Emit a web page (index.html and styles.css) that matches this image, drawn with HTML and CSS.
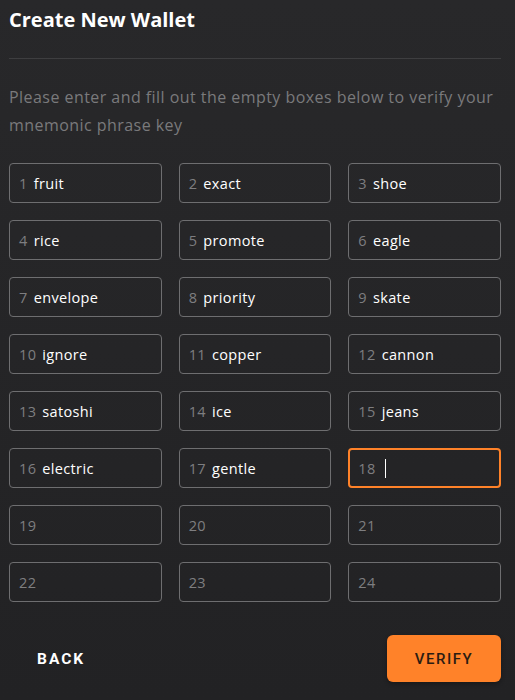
FILE: index.html
```html
<!DOCTYPE html>
<html>
<head>
<meta charset="utf-8">
<link rel="stylesheet" href="styles.css">
</head>
<body>
<div class="page">
  <h1 class="title">Create New Wallet</h1>
  <hr class="divider">
  <p class="desc">Please enter and fill out the empty boxes below to verify your mnemonic phrase key</p>
  <div class="grid">
    <div class="box"><span class="num">1</span><span class="word">fruit</span></div>
    <div class="box"><span class="num">2</span><span class="word">exact</span></div>
    <div class="box"><span class="num">3</span><span class="word">shoe</span></div>
    <div class="box"><span class="num">4</span><span class="word">rice</span></div>
    <div class="box"><span class="num">5</span><span class="word">promote</span></div>
    <div class="box"><span class="num">6</span><span class="word">eagle</span></div>
    <div class="box"><span class="num">7</span><span class="word">envelope</span></div>
    <div class="box"><span class="num">8</span><span class="word">priority</span></div>
    <div class="box"><span class="num">9</span><span class="word">skate</span></div>
    <div class="box"><span class="num">10</span><span class="word">ignore</span></div>
    <div class="box"><span class="num">11</span><span class="word">copper</span></div>
    <div class="box"><span class="num">12</span><span class="word">cannon</span></div>
    <div class="box"><span class="num">13</span><span class="word">satoshi</span></div>
    <div class="box"><span class="num">14</span><span class="word">ice</span></div>
    <div class="box"><span class="num">15</span><span class="word">jeans</span></div>
    <div class="box"><span class="num">16</span><span class="word">electric</span></div>
    <div class="box"><span class="num">17</span><span class="word">gentle</span></div>
    <div class="box focus"><span class="num">18</span><span class="caret"></span></div>
    <div class="box"><span class="num">19</span></div>
    <div class="box"><span class="num">20</span></div>
    <div class="box"><span class="num">21</span></div>
    <div class="box"><span class="num">22</span></div>
    <div class="box"><span class="num">23</span></div>
    <div class="box"><span class="num">24</span></div>
  </div>
  <div class="footer">
    <button class="btn back">BACK</button>
    <button class="btn verify">VERIFY</button>
  </div>
</div>
</body>
</html>
```
FILE: styles.css
```css
html, body {
  margin: 0;
  padding: 0;
  background: #262628;
  height: 100%;
}
body {
  background: linear-gradient(#28282a, #222224);
  font-family: "Open Sans", "Liberation Sans", sans-serif;
}
.page {
  width: 492px;
  padding: 0 0 0 9px;
}
.title {
  margin: 0;
  padding-top: 7px;
  font-size: 20px;
  line-height: 26px;
  font-weight: 700;
  color: #ffffff;
  font-family: "Open Sans", sans-serif;
}
.divider {
  margin: 25px 0 0 0;
  border: 0;
  border-top: 1px solid #3e3e40;
  height: 0;
}
.desc {
  margin: 24px 0 0 0;
  font-size: 16px;
  letter-spacing: 0.45px;
  line-height: 28px;
  color: #7a7a7c;
}
.grid {
  margin-top: 24px;
  display: grid;
  grid-template-columns: repeat(3, 1fr);
  column-gap: 17px;
  row-gap: 17px;
}
.box {
  height: 40px;
  box-sizing: border-box;
  border: 1px solid #6e6e70;
  border-radius: 4px;
  display: flex;
  align-items: center;
  padding: 0 9px;
  gap: 6px;
  font-size: 14.5px;
  letter-spacing: 0.35px;
}
.box.focus {
  border: 2px solid #ff8229;
  padding: 0 8px;
}
.num {
  color: #7e7e80;
}
.word {
  color: #ffffff;
  font-weight: 500;
}
.caret {
  display: inline-block;
  width: 1px;
  height: 19px;
  background: #ffffff;
  margin-left: 3px;
}
.footer {
  margin-top: 33px;
  display: flex;
  justify-content: space-between;
  align-items: center;
}
.btn {
  font-family: Roboto, sans-serif;
  border: 0;
  font-size: 15px;
  letter-spacing: 1.5px;
  cursor: pointer;
}
.back {
  background: transparent;
  color: #ffffff;
  font-weight: 700;
  font-size: 15.5px;
  letter-spacing: 2px;
  padding: 0 28px;
  height: 47px;
}
.verify {
  width: 114px;
  height: 47px;
  background: #ff8229;
  color: #2a1c12;
  font-weight: 500;
  border-radius: 6px;
  box-shadow: 0 2px 4px rgba(0,0,0,0.3);
}
```
